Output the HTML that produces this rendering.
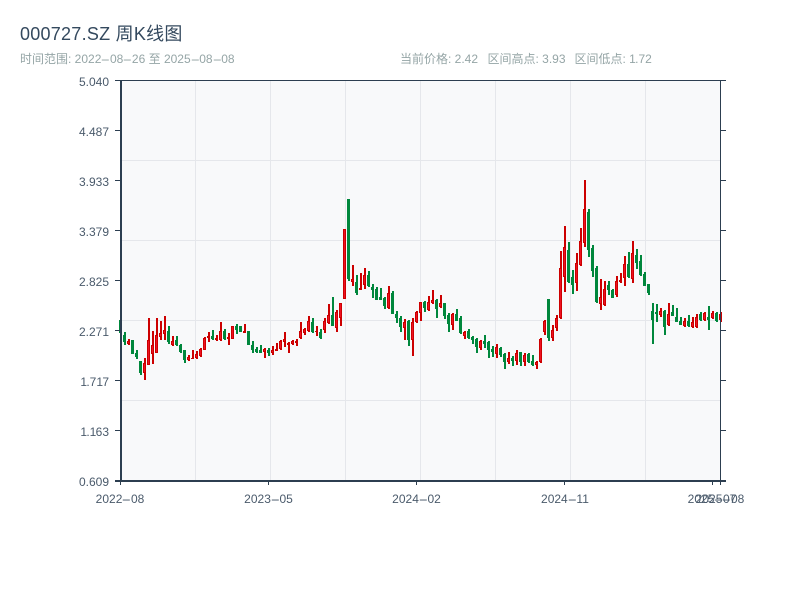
<!DOCTYPE html>
<html lang="zh">
<head>
<meta charset="utf-8">
<title>000727.SZ 周K线图</title>
<style>
html,body{margin:0;padding:0;background:#fff;width:800px;height:600px;overflow:hidden}
body{position:relative;font-family:"Liberation Sans","Noto Sans CJK SC",sans-serif}
.t{position:absolute;white-space:pre;line-height:1;font-size:12px;z-index:2}
.s{color:#95a5a6;top:53px}
.y{color:#4a5a6b;left:49px;width:60px;text-align:right}
.x{color:#4a5a6b;top:493px;width:60px;text-align:center}
i{font-style:normal;display:inline-block;width:8.6px;text-align:center;transform:scaleX(2.4)}
b{font-weight:normal;letter-spacing:-.7px}
svg{position:absolute;left:0;top:0}
</style>
</head>
<body>
<div class="t" style="left:20px;top:25px;font-size:18px;letter-spacing:.25px;color:#34495e">000727.SZ 周K线图</div>
<div class="t s" style="left:20px">时间范围: 2022<i>-</i>08<i>-</i>26 至 2025<i>-</i>08<i>-</i>08</div>
<div class="t s" style="left:400px">当前价格: 2.42</div>
<div class="t s" style="left:487.5px">区间高点: 3.93</div>
<div class="t s" style="left:574.5px">区间低点: <b>1</b>.72</div>
<svg width="800" height="600" viewBox="0 0 800 600" shape-rendering="crispEdges">
<rect x="120" y="80" width="600" height="400" fill="#f8f9fa"/>
<path fill="none" stroke="#e5e7eb" stroke-width="1" d="M195.5 80V480M270.5 80V480M345.5 80V480M420.5 80V480M495.5 80V480M570.5 80V480M645.5 80V480M120 160.5H720M120 240.5H720M120 320.5H720M120 400.5H720"/>

<path fill="none" stroke="#cc0000" stroke-width="2" d="M129 339V345M145 358V380M149 318V365M153 331V364M157 318V353M161 321V340M165 316V340M173 336V346M189 355V361M193 350V359M197 351V359M201 348V357M205 337V350M209 332V342M217 335V341M221 322V341M229 333V345M233 326V339M245 324V333M265 348V358M273 346V355M277 343V351M281 340V350M285 332V347M289 342V353M293 340V345M297 339V346M301 322V339M305 328V335M309 316V332M317 326V336M325 318V333M329 304V324M337 310V332M341 303V326M345 229V299M353 265V286M361 273V290M365 268V289M389 286V309M405 319V340M413 318V356M417 311V323M421 302V321M429 296V311M433 290V304M441 295V308M453 313V330M465 331V339M481 340V350M497 344V358M509 352V364M517 350V365M525 353V366M537 361V369M541 338V363M545 320V335M553 325V341M557 315V331M561 251V319M565 226V292M577 253V291M581 228V266M585 180V247M601 279V310M605 281V306M617 276V297M621 273V283M625 256V286M633 241V283M661 308V317M669 303V326M685 318V327M693 317V328M697 314V328M705 312V321M713 311V319M721 312V322"/>
<path fill="none" stroke="#cc0000" stroke-width="3" d="M128.5 341V344M144.5 363V373M148.5 340V365M152.5 345V354M156.5 335V353M160.5 333V337M164.5 330V334M172.5 341V345M188.5 357V360M192.5 358V359M196.5 354V358M200.5 349V356M204.5 338V350M208.5 336V338M216.5 338V340M220.5 331V340M228.5 337V339M232.5 326V339M244.5 331V333M264.5 349V352M272.5 350V353M276.5 349V351M280.5 341V349M284.5 339V342M288.5 343V345M292.5 341V344M296.5 341V343M300.5 331V338M304.5 329V333M308.5 321V331M316.5 331V332M324.5 321V330M328.5 315V323M336.5 312V328M340.5 303V318M344.5 229V299M352.5 279V282M360.5 288V290M364.5 275V285M388.5 293V308M404.5 322V328M412.5 322V340M416.5 312V322M420.5 302V313M428.5 302V310M432.5 300V303M440.5 303V307M452.5 314V325M464.5 332V336M480.5 341V348M496.5 347V354M508.5 358V362M516.5 353V361M524.5 355V362M536.5 362V365M540.5 339V362M544.5 321V332M552.5 330V338M556.5 318V328M560.5 268V318M564.5 247V277M576.5 263V283M580.5 241V265M584.5 209V243M600.5 297V304M604.5 289V305M616.5 281V295M620.5 280V282M624.5 264V278M632.5 253V279M660.5 311V315M668.5 314V325M684.5 321V326M692.5 322V327M696.5 317V327M704.5 313V320M712.5 313V318M720.5 314V320"/>
<path fill="none" stroke="#ee1122" stroke-width="1" d="M128.5 342V343M144.5 364V372M148.5 341V364M152.5 346V353M156.5 336V352M160.5 334V336M164.5 331V333M172.5 342V344M188.5 358V359M196.5 355V357M200.5 350V355M204.5 339V349M220.5 332V339M232.5 327V338M264.5 350V351M272.5 351V352M280.5 342V348M284.5 340V341M292.5 342V343M300.5 332V337M304.5 330V332M308.5 322V330M324.5 322V329M328.5 316V322M336.5 313V327M340.5 304V317M344.5 230V298M352.5 280V281M364.5 276V284M388.5 294V307M404.5 323V327M412.5 323V339M416.5 313V321M420.5 303V312M428.5 303V309M432.5 301V302M440.5 304V306M452.5 315V324M464.5 333V335M480.5 342V347M496.5 348V353M508.5 359V361M516.5 354V360M524.5 356V361M536.5 363V364M540.5 340V361M544.5 322V331M552.5 331V337M556.5 319V327M560.5 269V317M564.5 248V276M576.5 264V282M580.5 242V264M584.5 210V242M600.5 298V303M604.5 290V304M616.5 282V294M624.5 265V277M632.5 254V278M660.5 312V314M668.5 315V324M684.5 322V325M692.5 323V326M696.5 318V326M704.5 314V319M712.5 314V317"/>

<path fill="none" stroke="#00873c" stroke-width="2" d="M121 320V333M125 332V345M133 340V354M137 350V359M141 361V375M169 326V344M177 336V346M181 344V353M185 350V363M213 330V340M225 329V340M237 324V334M241 326V332M249 331V345M253 341V353M257 347V353M261 345V353M269 348V356M313 318V333M321 329V339M333 297V326M349 199V281M357 275V295M369 271V287M373 284V298M377 287V300M381 288V300M385 297V309M393 291V314M397 311V323M401 316V332M409 320V346M425 301V312M437 299V318M445 303V319M449 313V332M457 309V321M461 316V334M469 329V339M473 336V344M477 338V353M485 335V348M489 341V358M493 346V357M501 347V357M505 353V369M513 356V366M521 352V366M529 353V363M533 355V366M549 299V341M569 242V283M573 270V294M589 209V257M593 245V277M597 266V303M609 281V295M613 289V298M629 252V278M637 249V269M641 255V276M645 272V286M649 284V295M653 303V344M657 304V322M665 310V335M673 305V316M677 308V322M681 317V325M689 315V327M701 312V321M709 306V330M717 312V322"/>
<path fill="none" stroke="#00873c" stroke-width="3" d="M120.5 320V333M124.5 335V342M132.5 340V354M136.5 353V357M140.5 361V373M168.5 331V342M176.5 340V345M180.5 345V352M184.5 350V360M212.5 336V339M224.5 331V339M236.5 326V330M240.5 326V332M248.5 331V345M252.5 345V350M256.5 349V352M260.5 350V353M268.5 350V353M312.5 322V332M320.5 332V338M332.5 315V326M348.5 199V279M356.5 282V293M368.5 275V286M372.5 287V290M376.5 289V300M380.5 297V300M384.5 298V306M392.5 293V314M396.5 314V318M400.5 318V327M408.5 321V340M424.5 302V308M436.5 300V309M444.5 303V316M448.5 315V324M456.5 314V321M460.5 318V333M468.5 331V338M472.5 337V340M476.5 339V347M484.5 341V344M488.5 342V350M492.5 349V352M500.5 348V355M504.5 354V362M512.5 358V361M520.5 352V362M528.5 354V362M532.5 361V365M548.5 299V338M568.5 250V282M572.5 277V285M588.5 212V250M592.5 248V271M596.5 268V302M608.5 285V290M612.5 290V298M628.5 264V277M636.5 255V263M640.5 261V275M644.5 274V286M648.5 284V293M652.5 311V320M656.5 312V314M664.5 311V327M672.5 312V316M676.5 317V322M680.5 321V325M688.5 321V326M700.5 314V320M708.5 317V320M716.5 313V321"/>

<path fill="none" stroke="#2c3e50" stroke-width="1" d="M115 80.5H726M720.5 80V481M115 130.5H120M115 180.5H120M115 230.5H120M115 280.5H120M115 330.5H120M115 380.5H120M115 430.5H120M115 480.5H120M721 130.5H726M721 180.5H726M721 230.5H726M721 280.5H726M721 330.5H726M721 380.5H726M721 430.5H726M120.5 481V485M268.5 481V485M416.5 481V485M564.5 481V485M712.5 481V485M720.5 481V485"/>
<path fill="none" stroke="#2c3e50" stroke-width="2" d="M121 80V482M115 481H726"/>
</svg>
<div class="t y" style="top:76px">5.040</div>
<div class="t y" style="top:126px">4.487</div>
<div class="t y" style="top:176px">3.933</div>
<div class="t y" style="top:226px">3.379</div>
<div class="t y" style="top:276px">2.825</div>
<div class="t y" style="top:326px">2.271</div>
<div class="t y" style="top:376px"><b>1</b>.7<b>1</b>7</div>
<div class="t y" style="top:426px"><b>1</b>.<b>1</b>63</div>
<div class="t y" style="top:476px">0.609</div>
<div class="t x" style="left:90px">2022<i>-</i>08</div>
<div class="t x" style="left:238.5px">2023<i>-</i>05</div>
<div class="t x" style="left:386.5px">2024<i>-</i>02</div>
<div class="t x" style="left:535px">2024<i>-</i><b>1</b>1</div>
<div class="t x" style="left:682px">2025<i>-</i>07</div>
<div class="t x" style="left:690px">2025<i>-</i>08</div>
</body>
</html>
